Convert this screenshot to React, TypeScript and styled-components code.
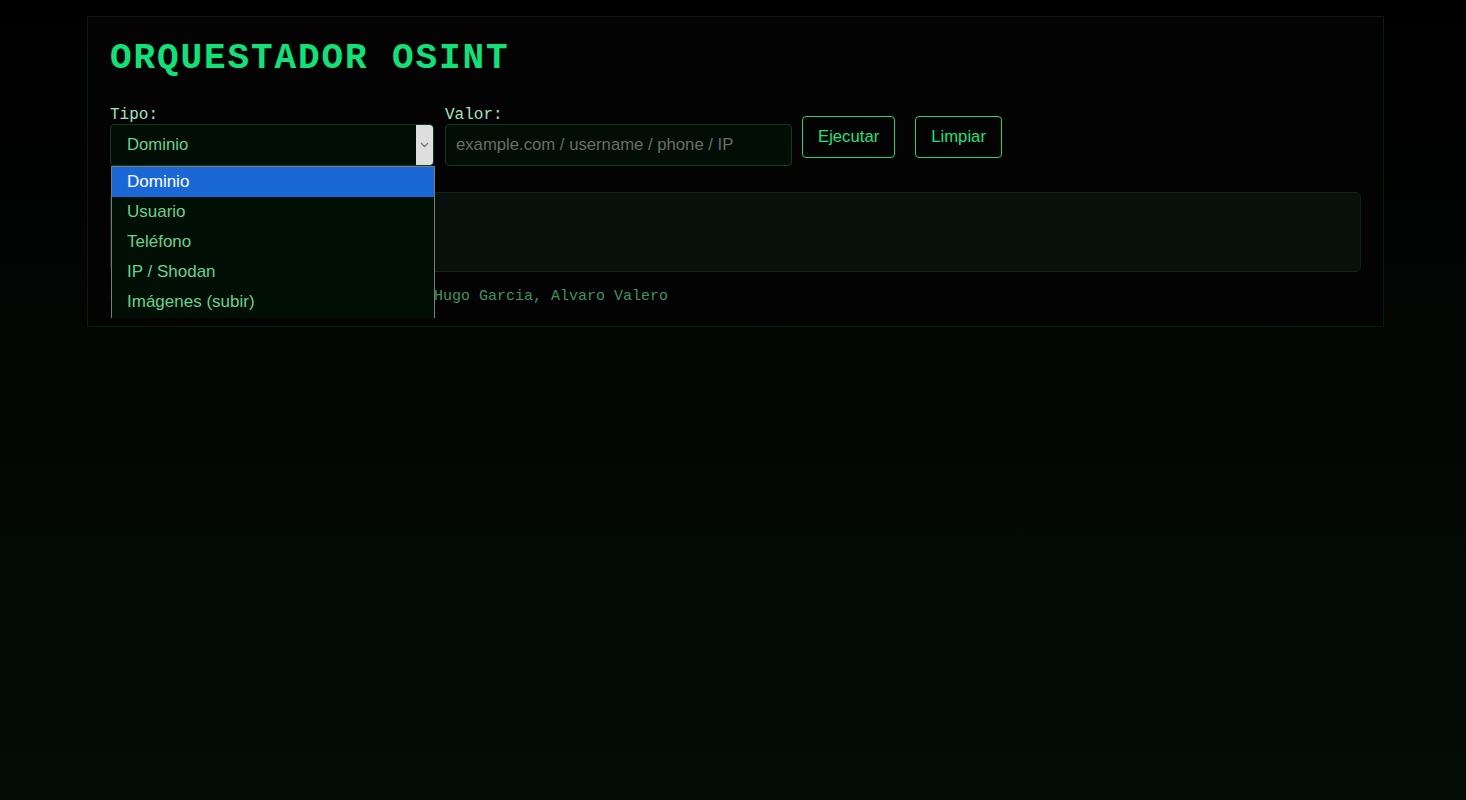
import React from "react";
import styled, { createGlobalStyle } from "styled-components";

const GlobalStyle = createGlobalStyle`
  html, body {
    margin: 0;
    padding: 0;
    min-height: 100%;
  }
  body {
    min-height: 800px;
    background: linear-gradient(180deg, #000000 0%, #020603 45%, #040c06 100%);
    font-family: "Liberation Mono", "Courier New", monospace;
  }
`;

const Page = styled.div`
  padding: 16px 0;
`;

const Panel = styled.main`
  position: relative;
  box-sizing: border-box;
  width: 1297px;
  margin: 0 auto 0 87px;
  padding: 22px 22px 21px;
  border: 1px solid #0b1a10;
  background: #020302;
`;

const Title = styled.h1`
  margin: 0 0 28px;
  font-family: "Liberation Mono", "Courier New", monospace;
  font-weight: 700;
  font-size: 36px;
  line-height: 40px;
  letter-spacing: 1.9px;
  color: #14e07a;
`;

const Row = styled.div`
  display: flex;
  align-items: center;
  gap: 10px;
`;

const Field = styled.div<{ $width: number; $offset?: number }>`
  position: relative;
  display: flex;
  flex-direction: column;
  width: ${(p) => p.$width}px;
  margin-left: ${(p) => p.$offset ?? 0}px;
`;

const Label = styled.label`
  display: block;
  font-family: "Liberation Mono", "Courier New", monospace;
  font-size: 16px;
  line-height: 17px;
  color: #a6e3bf;
`;

const SelectBox = styled.div`
  box-sizing: border-box;
  display: flex;
  align-items: stretch;
  height: 42px;
  border: 1px solid #0f3a22;
  border-radius: 4px;
  background: #020e05;
  overflow: hidden;
`;

const SelectValue = styled.span`
  flex: 1;
  display: flex;
  align-items: center;
  padding-left: 16px;
  font-family: "Liberation Sans", Arial, sans-serif;
  font-size: 16.7px;
  color: #6bcf8e;
`;

const ArrowBox = styled.span`
  width: 17px;
  display: flex;
  align-items: center;
  justify-content: center;
  background: #dedede;
  border-radius: 0 3px 3px 0;
`;

const Input = styled.input`
  box-sizing: border-box;
  height: 42px;
  width: 100%;
  padding: 0 10px;
  border: 1px solid #0f3a22;
  border-radius: 4px;
  background: #020e05;
  font-family: "Liberation Sans", Arial, sans-serif;
  font-size: 16.7px;
  color: #6bcf8e;
  outline: none;
  &::placeholder {
    color: #686d69;
  }
`;

const Button = styled.button<{ $push?: number }>`
  box-sizing: border-box;
  height: 42px;
  padding: 0 15px;
  margin-left: ${(p) => p.$push ?? 0}px;
  border: 1px solid #1ed277;
  border-radius: 4px;
  background: transparent;
  font-family: "Liberation Sans", Arial, sans-serif;
  font-size: 16.7px;
  color: #1fe07c;
  cursor: pointer;
`;

const Output = styled.section`
  box-sizing: border-box;
  height: 80px;
  margin-top: 26px;
  border: 1px solid #0f2417;
  border-radius: 6px;
  background: #07100a;
`;

const Footer = styled.footer`
  margin-top: 16px;
  font-family: "Liberation Mono", "Courier New", monospace;
  font-size: 15px;
  line-height: 17px;
  color: #3d9462;
  white-space: pre;
`;

const Dropdown = styled.ul`
  position: absolute;
  z-index: 5;
  top: 100%;
  left: 1px;
  box-sizing: border-box;
  width: 324px;
  height: 152px;
  margin: 0;
  padding: 0;
  list-style: none;
  background: #020f05;
  border: 1px solid #7a7a7a;
  border-bottom: none;
  overflow: hidden;
`;

const Option = styled.li<{ $active?: boolean }>`
  height: 30px;
  display: flex;
  align-items: center;
  padding-left: 15px;
  font-family: "Liberation Sans", Arial, sans-serif;
  font-size: 17px;
  color: ${(p) => (p.$active ? "#ffffff" : "#6bcf8e")};
  background: ${(p) => (p.$active ? "#1a68d6" : "transparent")};
`;

const options = ["Dominio", "Usuario", "Teléfono", "IP / Shodan", "Imágenes (subir)"];

export default function App() {
  return (
    <Page>
      <GlobalStyle />
      <Panel>
        <Title>ORQUESTADOR OSINT</Title>
        <Row>
          <Field $width={324}>
            <Label>Tipo:</Label>
            <SelectBox>
              <SelectValue>Dominio</SelectValue>
              <ArrowBox>
                <svg width="9" height="6" viewBox="0 0 9 6">
                  <path d="M1 1 L4.5 4.5 L8 1" fill="none" stroke="#777" strokeWidth="1.3" />
                </svg>
              </ArrowBox>
            </SelectBox>
            <Dropdown>
              {options.map((o, i) => (
                <Option key={o} $active={i === 0}>
                  {o}
                </Option>
              ))}
            </Dropdown>
          </Field>
          <Field $width={347} $offset={1}>
            <Label>Valor:</Label>
            <Input placeholder="example.com / username / phone / IP" />
          </Field>
          <Button>Ejecutar</Button>
          <Button $push={10}>Limpiar</Button>
        </Row>
        <Output />
        <Footer>Proyecto OSINT educativo · Autores: Hugo Garcia, Alvaro Valero</Footer>
      </Panel>
    </Page>
  );
}
